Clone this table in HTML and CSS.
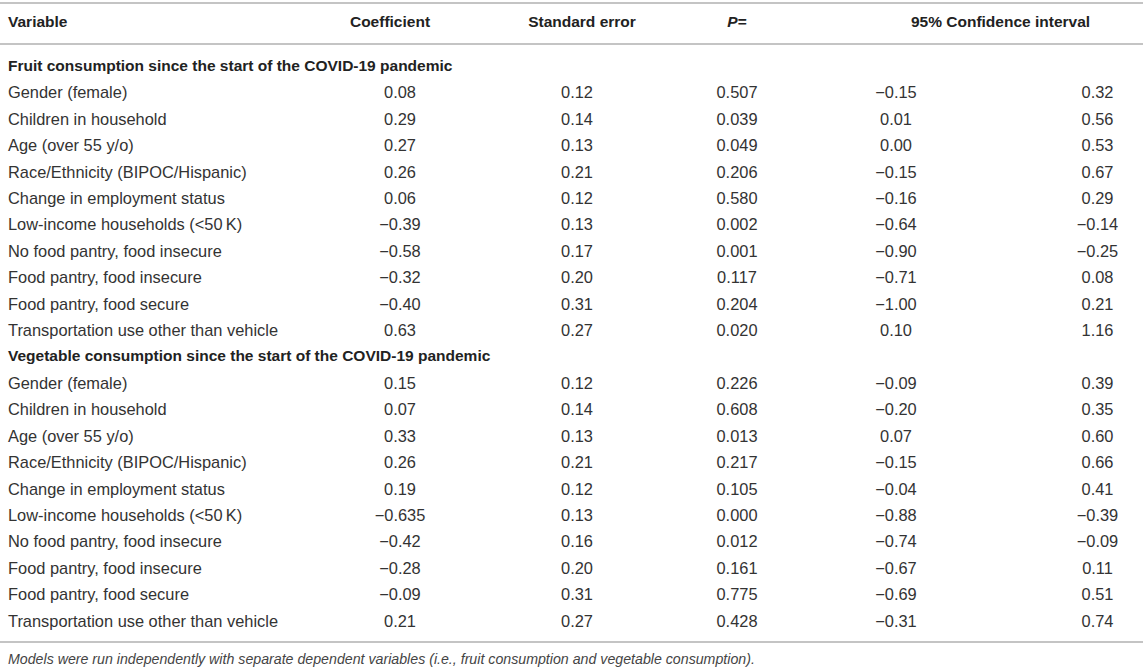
FILE: index.html
```html
<!DOCTYPE html>
<html>
<head>
    <title>Regression table</title>
    <link rel="stylesheet" href="styles.css">
</head>
<body>
    <table class="results">
        <colgroup>
            <col class="c-var">
            <col class="c-coef">
            <col class="c-se">
            <col class="c-p">
            <col class="c-lo">
            <col class="c-hi">
        </colgroup>
        <thead>
            <tr>
                <th class="var">Variable</th>
                <th class="coef">Coefficient</th>
                <th class="se">Standard error</th>
                <th><i>P</i>=</th>
                <th colspan="2" class="ci">95% Confidence interval</th>
            </tr>
        </thead>
        <tbody>
            <tr class="group first"><td colspan="6">Fruit consumption since the start of the COVID-19 pandemic</td></tr>
            <tr><td>Gender (female)</td><td>0.08</td><td>0.12</td><td>0.507</td><td>−0.15</td><td class="hi">0.32</td></tr>
            <tr><td>Children in household</td><td>0.29</td><td>0.14</td><td>0.039</td><td>0.01</td><td class="hi">0.56</td></tr>
            <tr><td>Age (over 55 y/o)</td><td>0.27</td><td>0.13</td><td>0.049</td><td>0.00</td><td class="hi">0.53</td></tr>
            <tr><td>Race/Ethnicity (BIPOC/Hispanic)</td><td>0.26</td><td>0.21</td><td>0.206</td><td>−0.15</td><td class="hi">0.67</td></tr>
            <tr><td>Change in employment status</td><td>0.06</td><td>0.12</td><td>0.580</td><td>−0.16</td><td class="hi">0.29</td></tr>
            <tr><td>Low-income households (&lt;50&#8201;K)</td><td>−0.39</td><td>0.13</td><td>0.002</td><td>−0.64</td><td class="hi">−0.14</td></tr>
            <tr><td>No food pantry, food insecure</td><td>−0.58</td><td>0.17</td><td>0.001</td><td>−0.90</td><td class="hi">−0.25</td></tr>
            <tr><td>Food pantry, food insecure</td><td>−0.32</td><td>0.20</td><td>0.117</td><td>−0.71</td><td class="hi">0.08</td></tr>
            <tr><td>Food pantry, food secure</td><td>−0.40</td><td>0.31</td><td>0.204</td><td>−1.00</td><td class="hi">0.21</td></tr>
            <tr><td>Transportation use other than vehicle</td><td>0.63</td><td>0.27</td><td>0.020</td><td>0.10</td><td class="hi">1.16</td></tr>
            <tr class="group"><td colspan="6">Vegetable consumption since the start of the COVID-19 pandemic</td></tr>
            <tr><td>Gender (female)</td><td>0.15</td><td>0.12</td><td>0.226</td><td>−0.09</td><td class="hi">0.39</td></tr>
            <tr><td>Children in household</td><td>0.07</td><td>0.14</td><td>0.608</td><td>−0.20</td><td class="hi">0.35</td></tr>
            <tr><td>Age (over 55 y/o)</td><td>0.33</td><td>0.13</td><td>0.013</td><td>0.07</td><td class="hi">0.60</td></tr>
            <tr><td>Race/Ethnicity (BIPOC/Hispanic)</td><td>0.26</td><td>0.21</td><td>0.217</td><td>−0.15</td><td class="hi">0.66</td></tr>
            <tr><td>Change in employment status</td><td>0.19</td><td>0.12</td><td>0.105</td><td>−0.04</td><td class="hi">0.41</td></tr>
            <tr><td>Low-income households (&lt;50&#8201;K)</td><td>−0.635</td><td>0.13</td><td>0.000</td><td>−0.88</td><td class="hi">−0.39</td></tr>
            <tr><td>No food pantry, food insecure</td><td>−0.42</td><td>0.16</td><td>0.012</td><td>−0.74</td><td class="hi">−0.09</td></tr>
            <tr><td>Food pantry, food insecure</td><td>−0.28</td><td>0.20</td><td>0.161</td><td>−0.67</td><td class="hi">0.11</td></tr>
            <tr><td>Food pantry, food secure</td><td>−0.09</td><td>0.31</td><td>0.775</td><td>−0.69</td><td class="hi">0.51</td></tr>
            <tr class="last"><td>Transportation use other than vehicle</td><td>0.21</td><td>0.27</td><td>0.428</td><td>−0.31</td><td class="hi">0.74</td></tr>
        </tbody>
    </table>
    <p class="note">Models were run independently with separate dependent variables (i.e., fruit consumption and vegetable consumption).</p>
</body>
</html>
```

FILE: styles.css
```css
body { margin: 0; background: #fff; color: #333; font-family: "Liberation Sans", Arial, sans-serif; font-size: 16.4px; }
.results { width: 1143px; border-collapse: collapse; table-layout: fixed; margin-top: 2px; }
.c-var { width: 312px; }
.c-coef { width: 176px; }
.c-se { width: 178px; }
.c-p { width: 142px; }
.c-lo { width: 176px; }
.c-hi { width: 159px; }
th { font-weight: bold; font-size: 15.5px; color: #222; text-align: center; padding: 8px 0 11px; line-height: 20px; border-top: 2px solid #c4c4c4; border-bottom: 2px solid #c4c4c4; }
th.var { text-align: left; padding-left: 8px; }
th.coef { padding-right: 20px; }
th.se { padding-left: 10px; }
th.ci { padding-left: 50px; }
td { text-align: center; padding: 0; line-height: 26.4px; white-space: nowrap; }
td:first-child { text-align: left; padding-left: 8px; }
td.hi { padding-left: 68px; }
.group td { font-weight: bold; font-size: 15.5px; color: #222; }
.first td { padding-top: 8px; }
.last td { padding-bottom: 7px; }
tbody tr.last td { border-bottom: 2px solid #c4c4c4; }
.note { margin: 8px 0 0; padding-left: 8px; font-size: 14.2px; line-height: 16px; font-style: italic; color: #444; }
```
